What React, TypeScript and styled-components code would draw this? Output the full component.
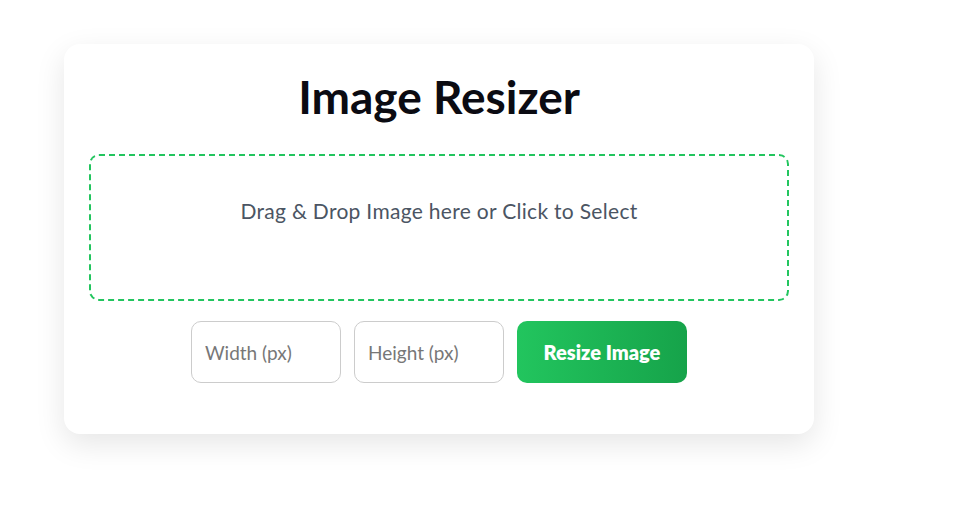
import React from "react";
import styled, { createGlobalStyle } from "styled-components";

const Global = createGlobalStyle`
  html, body { margin: 0; padding: 0; background: #ffffff; }
  body { font-family: "Lato", "Noto Sans", sans-serif; }
  * { box-sizing: border-box; }
`;

const Page = styled.div`
  width: 953px;
  height: 514px;
  padding: 44px 0 0 64px;
`;

const Card = styled.div`
  width: 750px;
  height: 390px;
  background: #ffffff;
  border-radius: 16px;
  box-shadow: 0 10px 30px rgba(0, 0, 0, 0.1);
  padding: 25px 25px;
  display: flex;
  flex-direction: column;
  align-items: center;
`;

const Title = styled.h1`
  margin: 0;
  height: 85px;
  padding-top: 2px;
  font-size: 46px;
  line-height: 52px;
  font-weight: 700;
  color: #0b0b12;
  text-align: center;
`;

const DropZone = styled.div`
  width: 700px;
  height: 147px;
  border: 2px dashed #22c55e;
  border-radius: 10px;
  padding-top: 43px;
  text-align: center;
  font-size: 21px;
  letter-spacing: 0.3px;
  line-height: 24px;
  color: #4b5563;
  cursor: pointer;
`;

const Controls = styled.div`
  margin-top: 20px;
  display: flex;
  gap: 13px;
  justify-content: center;
`;

const Input = styled.input`
  width: 150px;
  height: 62px;
  border: 1px solid #cccccc;
  border-radius: 10px;
  padding: 0 13px;
  font-family: inherit;
  font-size: 19px;
  color: #333;
  outline: none;
  &::placeholder { color: #777777; }
`;

const Button = styled.button`
  width: 170px;
  height: 62px;
  border: none;
  border-radius: 10px;
  background: linear-gradient(90deg, #22c55e, #16a34a);
  color: #ffffff;
  font-family: inherit;
  font-size: 20px;
  font-weight: 800;
  cursor: pointer;
`;

export default function App() {
  return (
    <>
      <Global />
      <Page>
        <Card>
          <Title>Image Resizer</Title>
          <DropZone>Drag &amp; Drop Image here or Click to Select</DropZone>
          <Controls>
            <Input placeholder="Width (px)" />
            <Input placeholder="Height (px)" />
            <Button>Resize Image</Button>
          </Controls>
        </Card>
      </Page>
    </>
  );
}
